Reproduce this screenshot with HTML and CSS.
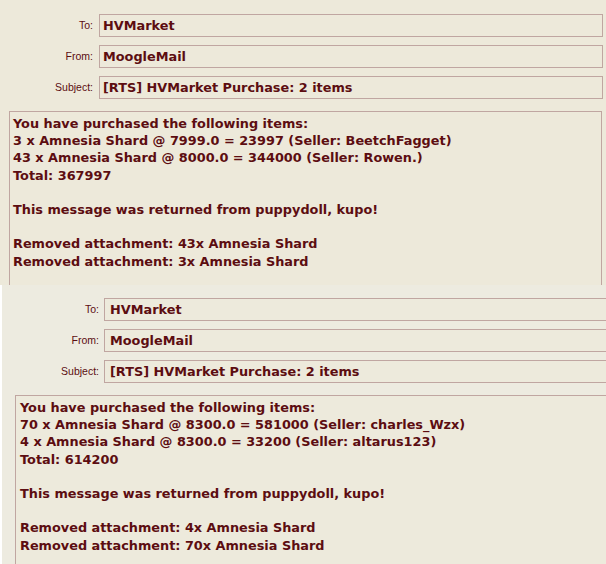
FILE: index.html
```html
<!DOCTYPE html>
<html>
<head>
<meta charset="utf-8">
<link rel="stylesheet" href="styles.css">
</head>
<body>
<div class="shot shot-a">
  <div class="head">
    <div class="row"><div class="label">To:</div><div class="field">HVMarket</div></div>
    <div class="row"><div class="label">From:</div><div class="field">MoogleMail</div></div>
    <div class="row"><div class="label">Subject:</div><div class="field">[RTS] HVMarket Purchase: 2 items</div></div>
  </div>
  <div class="msg">
    <div>You have purchased the following items:</div>
    <div>3 x Amnesia Shard @ 7999.0 = 23997 (Seller: BeetchFagget)</div>
    <div>43 x Amnesia Shard @ 8000.0 = 344000 (Seller: Rowen.)</div>
    <div>Total: 367997</div>
    <div class="gap"></div>
    <div>This message was returned from puppydoll, kupo!</div>
    <div class="gap"></div>
    <div>Removed attachment: 43x Amnesia Shard</div>
    <div>Removed attachment: 3x Amnesia Shard</div>
  </div>
</div>
<div class="shot shot-b">
  <div class="head">
    <div class="row"><div class="label">To:</div><div class="field">HVMarket</div></div>
    <div class="row"><div class="label">From:</div><div class="field">MoogleMail</div></div>
    <div class="row"><div class="label">Subject:</div><div class="field">[RTS] HVMarket Purchase: 2 items</div></div>
  </div>
  <div class="msg">
    <div>You have purchased the following items:</div>
    <div>70 x Amnesia Shard @ 8300.0 = 581000 (Seller: charles_Wzx)</div>
    <div>4 x Amnesia Shard @ 8300.0 = 33200 (Seller: altarus123)</div>
    <div>Total: 614200</div>
    <div class="gap"></div>
    <div>This message was returned from puppydoll, kupo!</div>
    <div class="gap"></div>
    <div>Removed attachment: 4x Amnesia Shard</div>
    <div>Removed attachment: 70x Amnesia Shard</div>
  </div>
</div>
</body>
</html>
```
FILE: styles.css
```css
html, body {
  margin: 0;
  padding: 0;
  background: #ffffff;
  overflow: hidden;
}
body {
  width: 606px;
  height: 564px;
  color: #5c0d11;
}
.shot {
  overflow: hidden;
  box-sizing: border-box;
}
.shot-a {
  height: 285px;
  width: 606px;
  background: #ede9da;
}
.shot-b {
  height: 279px;
  width: 604px;
  margin-left: 2px;
  background: #edebe0;
}
.head {
  display: flex;
  flex-direction: column;
  gap: 8px;
}
.shot-a .head { padding-top: 14px; }
.shot-b .head { padding-top: 13px; }
.row {
  display: flex;
  align-items: center;
  height: 23px;
}
.label {
  font-family: "Liberation Sans", Arial, sans-serif;
  font-size: 10.5px;
  text-align: right;
  flex: none;
  position: relative;
  top: -1px;
}
.shot-a .label { width: 93px; margin-right: 6px; }
.shot-b .label { width: 97px; margin-right: 5px; }
.field {
  flex: none;
  box-sizing: border-box;
  height: 23px;
  border: 1px solid #c0a6a1;
  font-family: "DejaVu Sans", Verdana, sans-serif;
  font-weight: bold;
  font-size: 12.85px;
  line-height: 21px;
  white-space: nowrap;
}
.shot-a .field { width: 504px; padding-left: 3px; background: #ede9da; }
.shot-b .field { width: 700px; padding-left: 5px; background: #edeadc; }
.msg {
  box-sizing: border-box;
  margin-top: 12px;
  height: 300px;
  border: 1px solid #c0a6a1;
  border-bottom: none;
  font-family: "DejaVu Sans", Verdana, sans-serif;
  font-weight: bold;
  font-size: 12.85px;
  line-height: 17.2px;
  white-space: nowrap;
}
.shot-a .msg { margin-left: 9px; width: 593px; padding: 3px 3px; background: #ede9da; }
.shot-b .msg { margin-left: 13px; width: 700px; padding: 3px 4px; background: #edeadc; }
.gap { height: 17.2px; }
```
